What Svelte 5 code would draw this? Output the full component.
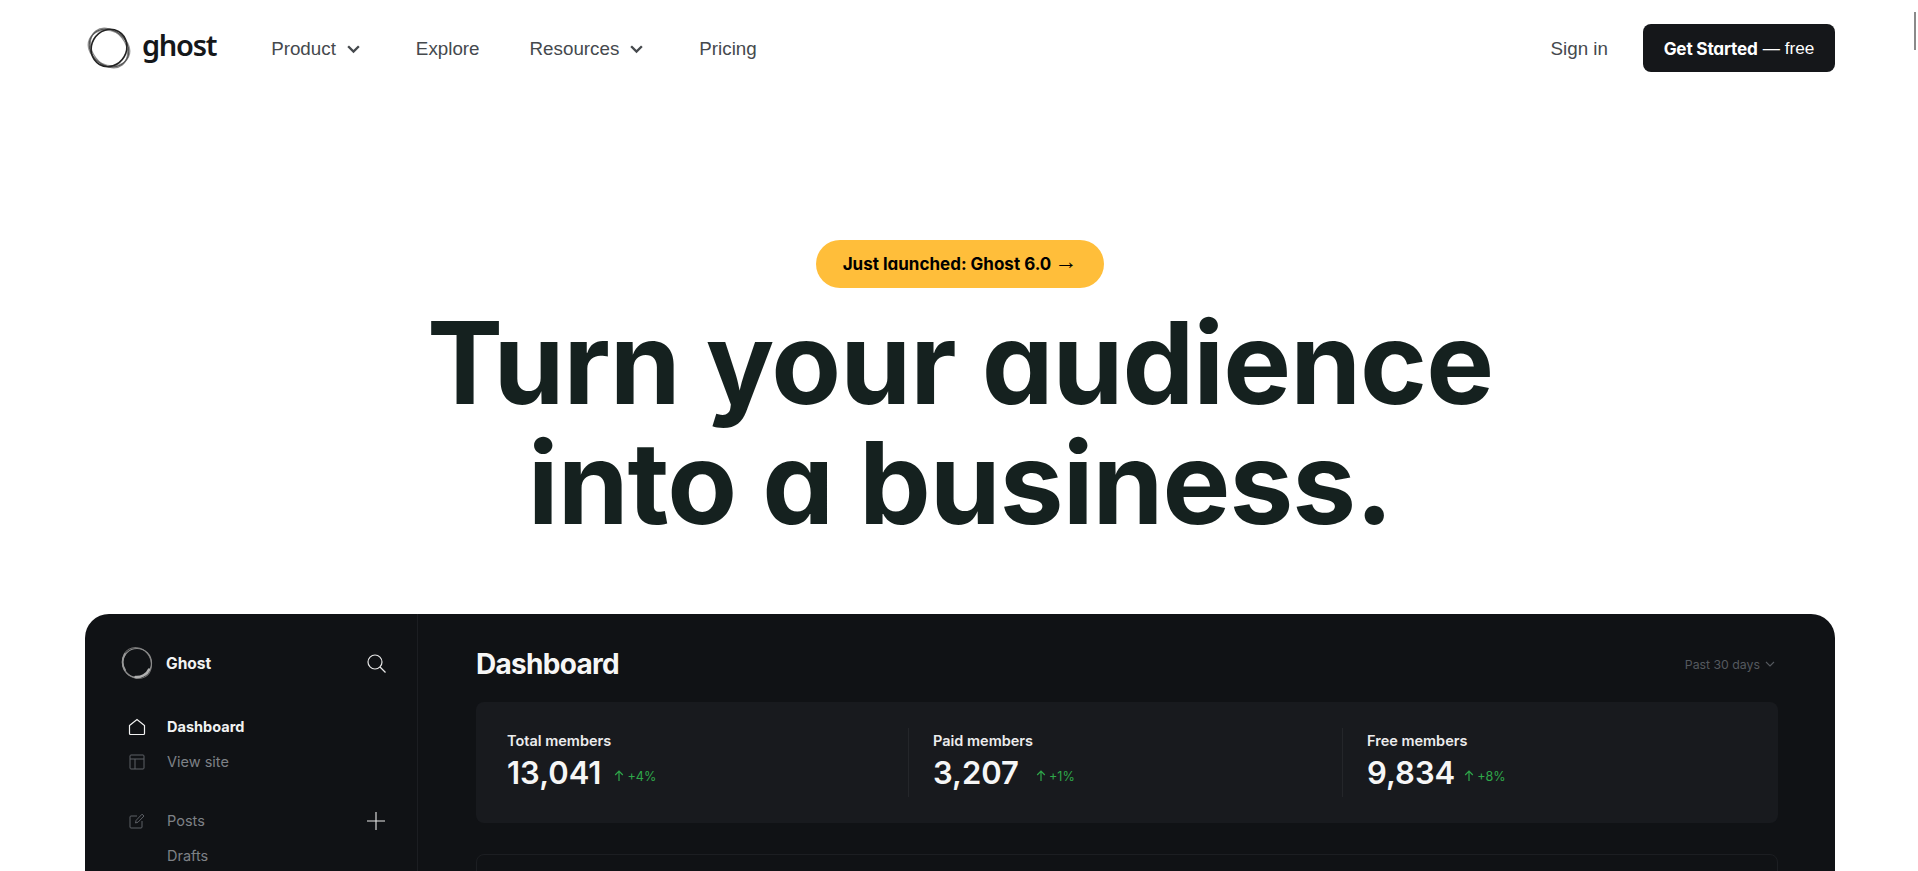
<script>
  const navLinks = [
    { label: 'Product', menu: true },
    { label: 'Explore', menu: false },
    { label: 'Resources', menu: true },
    { label: 'Pricing', menu: false },
  ];

  const stats = [
    { label: 'Total members', value: '13,041', change: '+4%' },
    { label: 'Paid members', value: '3,207', change: '+1%' },
    { label: 'Free members', value: '9,834', change: '+8%' },
  ];
</script>

<div class="page">
  <span class="scroll-mark"></span>

  <header class="topbar">
    <a class="logo" href="#home">
      <svg class="logo-mark" viewBox="0 0 44 44" fill="none" aria-hidden="true">
        <ellipse cx="22" cy="22" rx="21.5" ry="16.5" stroke="#8a8a8a" stroke-width="1.2" transform="rotate(52 22 22)" />
        <ellipse cx="22" cy="22" rx="21.5" ry="17" stroke="#a0a0a0" stroke-width="1.2" transform="rotate(24 22 22)" />
        <ellipse cx="22" cy="22" rx="21" ry="17.5" stroke="#555" stroke-width="1.3" transform="rotate(38 22 22)" />
        <ellipse cx="22" cy="22" rx="19" ry="17.5" stroke="#222" stroke-width="1.6" transform="rotate(120 22 22)" />
      </svg>
      <span class="logo-word">ghost</span>
    </a>

    <nav class="links">
      {#each navLinks as link}
        <a class="link" href="#nav">
          {link.label}
          {#if link.menu}
            <svg class="chev" viewBox="0 0 14 10" fill="none" stroke="currentColor" stroke-width="2.2" aria-hidden="true">
              <path d="M2 2l5 5 5-5" />
            </svg>
          {/if}
        </a>
      {/each}
    </nav>

    <div class="actions">
      <a class="signin" href="#signin">Sign in</a>
      <a class="cta" href="#start"><b>Get Started</b> — free</a>
    </div>
  </header>

  <section class="hero">
    <a class="pill" href="#launch">Just launched: Ghost 6.0 <span class="arrow">→</span></a>
    <h1>Turn your audience<br />into a business.</h1>
  </section>

  <section class="app">
    <aside class="side">
      <div class="brand">
        <svg class="brand-mark" viewBox="0 0 34 34" fill="none" aria-hidden="true">
          <ellipse cx="17" cy="17" rx="16" ry="14" stroke="#6f6f6f" stroke-width="1" transform="rotate(60 17 17)" />
          <circle cx="17" cy="17" r="14.5" stroke="#8b8b8b" stroke-width="1.2" />
          <path d="M29 23.5c-2 5-8 8-13.5 7.5" stroke="#b0b0b0" stroke-width="2.4" stroke-linecap="round" />
          <path d="M5 8c-3 5-3 11 0 16" stroke="#999" stroke-width="1.8" stroke-linecap="round" />
        </svg>
        <span class="brand-name">Ghost</span>
        <svg class="side-tool" viewBox="0 0 20 20" fill="none" stroke="#e8e8e8" stroke-width="1.2" aria-hidden="true">
          <circle cx="9" cy="9" r="7" />
          <path d="M14 14l5.5 5.5" />
        </svg>
      </div>

      <ul class="menu">
        <li class="item active">
          <svg viewBox="0 0 18 18" fill="none" stroke="currentColor" stroke-width="1.2" aria-hidden="true">
            <path d="M1.5 7.5L9 1.5l7.5 6v8a1 1 0 0 1-1 1h-13a1 1 0 0 1-1-1z" />
          </svg>
          Dashboard
        </li>
        <li class="item">
          <svg viewBox="0 0 18 18" fill="none" stroke="#5d6066" stroke-width="1" aria-hidden="true">
            <rect x="2" y="2" width="14" height="14" rx="1" />
            <path d="M2 6h14M7 6v10" />
          </svg>
          View site
        </li>
      </ul>

      <ul class="menu second">
        <li class="item">
          <svg viewBox="0 0 18 18" fill="none" stroke="#5d6066" stroke-width="1" aria-hidden="true">
            <path d="M9 4H3a1 1 0 0 0-1 1v10a1 1 0 0 0 1 1h10a1 1 0 0 0 1-1V9" />
            <path d="M7.5 11l.6-2.6L14 2.2l2 1.8-6 6.2z" />
          </svg>
          Posts
          <svg class="side-tool add" viewBox="0 0 20 20" fill="none" stroke="#e8e8e8" stroke-width="1.1" aria-hidden="true">
            <path d="M10 1v18M1 10h18" />
          </svg>
        </li>
        <li class="item">
          <span class="blank"></span>
          Drafts
        </li>
      </ul>
    </aside>

    <div class="main">
      <div class="main-head">
        <h2>Dashboard</h2>
        <span class="range">
          Past 30 days
          <svg viewBox="0 0 10 6" fill="none" stroke="currentColor" stroke-width="1.1" aria-hidden="true">
            <path d="M1 1l4 4 4-4" />
          </svg>
        </span>
      </div>

      <div class="stats">
        {#each stats as stat}
          <div class="stat">
            <div class="stat-label">{stat.label}</div>
            <div class="stat-row">
              <span class="stat-value">{stat.value}</span>
              <span class="stat-change">
                <svg viewBox="0 0 10 12" fill="none" stroke="currentColor" stroke-width="1.2" aria-hidden="true">
                  <path d="M5 11V1.5M1.2 5L5 1.2 8.8 5" />
                </svg>
                {stat.change}
              </span>
            </div>
          </div>
        {/each}
      </div>

      <div class="chart"></div>
    </div>
  </section>
</div>

<style>
  :global(body) {
    margin: 0;
    background: #fff;
  }

  .page {
    position: relative;
    height: 100vh;
    overflow: hidden;
    padding: 0 83px 0 85px;
    font-family: 'Liberation Sans', Arial, sans-serif;
  }

  a {
    text-decoration: none;
    color: inherit;
  }

  .scroll-mark {
    position: absolute;
    top: 12px;
    right: 2px;
    width: 2px;
    height: 38px;
    background: #8a8a8a;
  }

  .topbar {
    display: flex;
    align-items: center;
    padding: 24px 0;
  }

  .logo {
    display: flex;
    align-items: center;
    gap: 11px;
    color: #15171a;
    margin-left: 2px;
  }

  .logo-mark {
    width: 44px;
    height: 44px;
  }

  .logo-word {
    font-family: 'Noto Sans', sans-serif;
    font-size: 29px;
    font-weight: 600;
    letter-spacing: -1.3px;
    line-height: 44px;
    margin-top: -6px;
  }

  .links {
    display: flex;
    align-items: center;
    margin-left: 55px;
    padding-top: 2px;
  }

  .link {
    display: flex;
    align-items: center;
    gap: 10px;
    font-size: 18.8px;
    color: #45494d;
    margin-right: 50px;
  }

  .chev {
    width: 15px;
    height: 11px;
    margin-top: 1px;
    margin-right: 5px;
  }

  .actions {
    display: flex;
    align-items: center;
    gap: 35px;
    margin-left: auto;
  }

  .signin {
    font-size: 18.8px;
    color: #45494d;
    padding-top: 2px;
  }

  .cta {
    display: flex;
    align-items: center;
    justify-content: center;
    gap: 5px;
    width: 192px;
    height: 48px;
    border-radius: 8px;
    background: #15171a;
    color: #fff;
    font-size: 17.2px;
  }

  .cta b {
    font-family: Inter, sans-serif;
    font-feature-settings: 'cv11';
    font-size: 17.2px;
    letter-spacing: -0.2px;
  }

  .hero {
    display: flex;
    flex-direction: column;
    align-items: center;
    padding-top: 144px;
  }

  .pill {
    display: flex;
    align-items: center;
    justify-content: center;
    gap: 3px;
    width: 288px;
    height: 48px;
    border-radius: 24px;
    background: #ffbe3a;
    color: #000;
    font-family: Inter, sans-serif;
    font-feature-settings: 'cv11';
    font-size: 17px;
    font-weight: 700;
  }

  .arrow {
    font-family: 'Liberation Sans', Arial, sans-serif;
    font-size: 23px;
    font-weight: 400;
    line-height: 1;
    margin-bottom: 5px;
  }

  h1 {
    margin: 15px 0 71px;
    text-align: center;
    font-family: Inter, sans-serif;
    font-feature-settings: 'cv11';
    font-size: 114px;
    font-weight: 700;
    line-height: 120px;
    letter-spacing: -1px;
    color: #15211f;
  }

  .app {
    display: flex;
    height: 400px;
    border-radius: 24px;
    background: #101215;
    font-family: Inter, sans-serif;
    color: #fff;
  }

  .side {
    box-sizing: border-box;
    width: 333px;
    padding: 32px 30px 0 36px;
    border-right: 1px solid #1c1e22;
  }

  .brand {
    display: flex;
    align-items: center;
    height: 34px;
    margin-bottom: 29px;
  }

  .brand-mark {
    width: 34px;
    height: 34px;
    margin-right: 12px;
    margin-left: -1px;
  }

  .brand-name {
    font-size: 15.5px;
    font-weight: 700;
    color: #f2f2f2;
  }

  .side-tool {
    width: 20px;
    height: 20px;
    margin-left: auto;
    margin-right: 1px;
    flex: none;
  }

  .menu {
    list-style: none;
    margin: 0;
    padding: 0;
  }

  .second {
    margin-top: 24px;
  }

  .item {
    display: flex;
    align-items: center;
    gap: 21px;
    height: 35px;
    padding-left: 7px;
    font-size: 14.5px;
    color: #7e8186;
  }

  .item svg:first-child,
  .blank {
    width: 18px;
    height: 18px;
    flex: none;
  }

  .item.active {
    color: #f2f2f2;
    font-weight: 700;
  }

  .main {
    flex: 1;
    padding: 32px 57px 0 58px;
  }

  .main-head {
    display: flex;
    align-items: center;
    justify-content: space-between;
    height: 36px;
    margin-bottom: 20px;
  }

  h2 {
    margin: 0;
    font-size: 28px;
    font-weight: 700;
    letter-spacing: -0.7px;
    color: #f6f6f6;
  }

  .range {
    display: flex;
    align-items: center;
    gap: 5px;
    padding-right: 3px;
    font-size: 12.3px;
    color: #55595f;
  }

  .range svg {
    width: 10px;
    height: 6px;
  }

  .stats {
    display: grid;
    grid-template-columns: repeat(3, 1fr);
    padding: 26px 0;
    border-radius: 8px;
    background: #181a1e;
  }

  .stat {
    height: 69px;
    padding-left: 24px;
    border-left: 1px solid #24262a;
  }

  .stat + .stat {
    margin-left: -2px;
  }

  .stat:first-child {
    padding-left: 31px;
    border-left: none;
  }

  .stat:first-child .stat-change {
    margin-left: 4px;
  }

  .stat:nth-child(2) .stat-change {
    margin-left: 8px;
  }

  .stat-label {
    font-size: 14.5px;
    font-weight: 600;
    line-height: 20px;
    margin-top: 3px;
    color: #ececed;
  }

  .stat-row {
    display: flex;
    align-items: center;
    gap: 9px;
    margin-top: 3px;
  }

  .stat-value {
    font-size: 31px;
    font-weight: 600;
    line-height: 38px;
    color: #f6f6f6;
  }

  .stat-change {
    display: flex;
    align-items: center;
    gap: 3px;
    margin-top: 6px;
    font-size: 12.6px;
    color: #2fa84a;
  }

  .stat-change svg {
    width: 10px;
    height: 12px;
  }

  .chart {
    height: 200px;
    margin-top: 31px;
    border: 1px solid #1c1e22;
    border-radius: 8px;
  }
</style>
